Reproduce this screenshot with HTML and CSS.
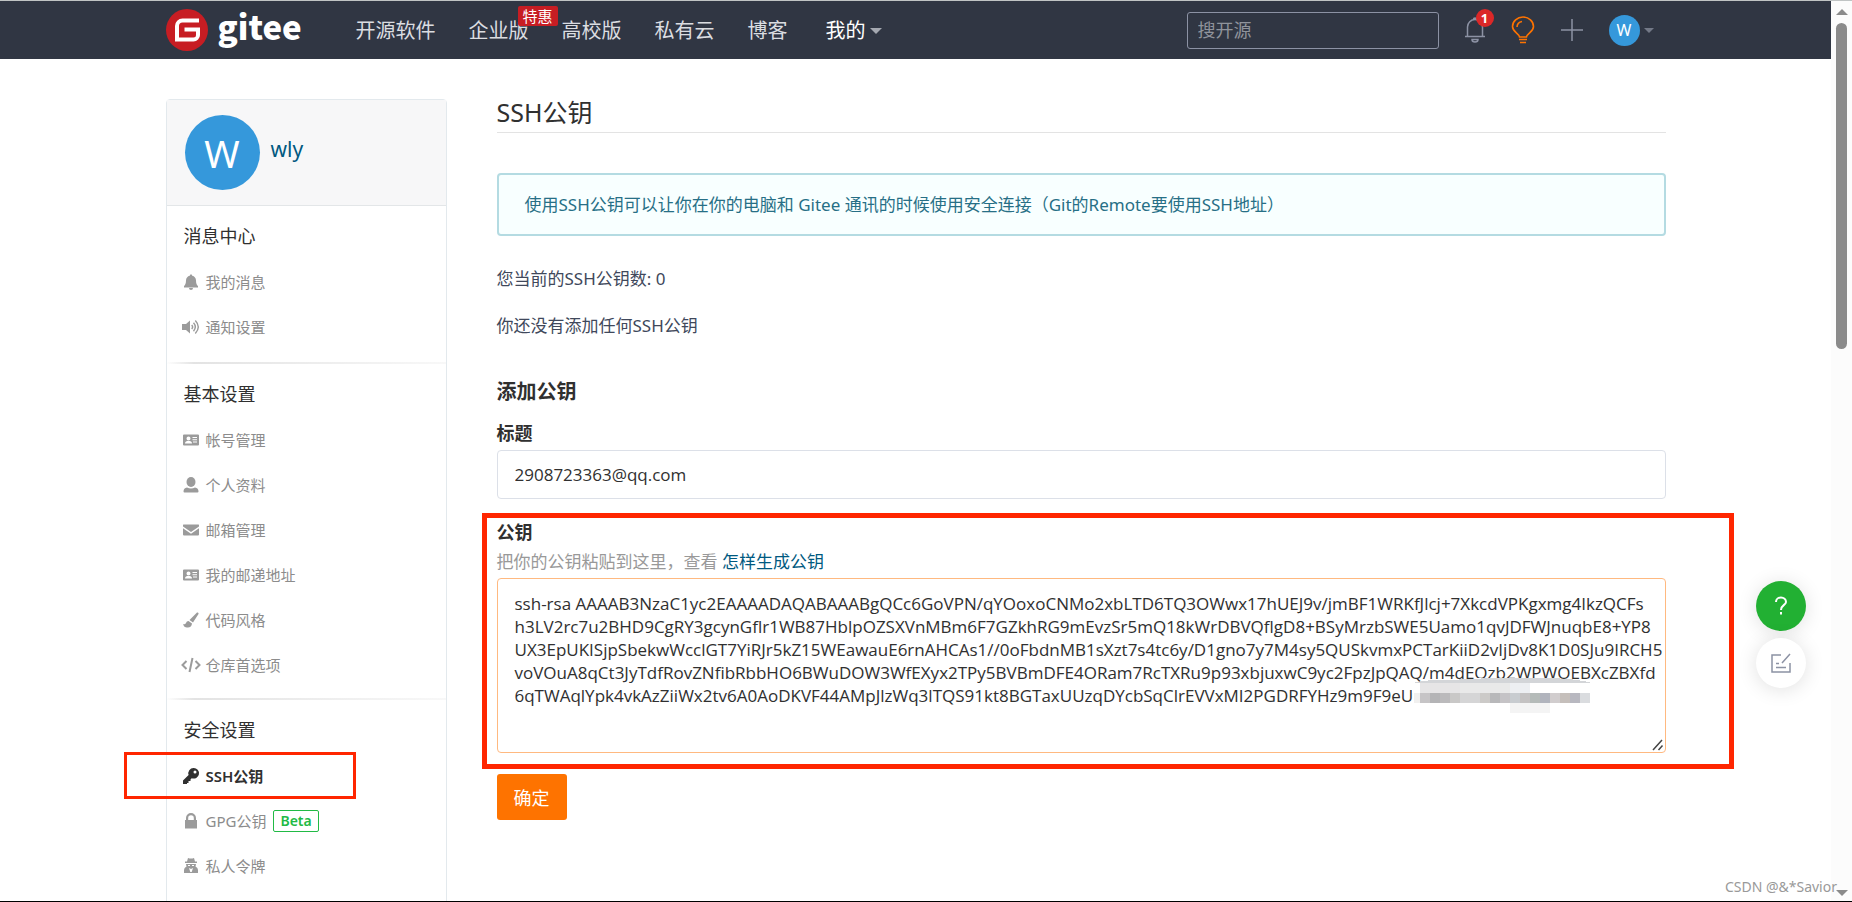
FILE: index.html
```html
<!DOCTYPE html>
<html lang="zh-CN">
<head>
<meta charset="utf-8">
<title>SSH公钥 - Gitee</title>
<link rel="stylesheet" href="styles.css">
</head>
<body>
<div class="window">
<div class="page">
  <header class="navbar">
    <div class="container navbar-inner">
      <a class="logo" href="#" aria-label="Gitee">
        <svg class="logo-mark" viewBox="0 0 42 42" aria-hidden="true"><circle cx="21" cy="21" r="21" fill="#c71d23"/><path d="M33 11.500H16.500a5.500 5.500 0 0 0-5.500 5.500V30.500H27.500a4.500 4.500 0 0 0 4.500-4.500V20.500H18.500" fill="none" stroke="#fff" stroke-width="4"/></svg>
        <span class="logo-text">gitee</span>
      </a>
      <nav class="menu">
        <a href="#">开源软件</a>
        <a href="#">企业版<span class="tag">特惠</span></a>
        <a href="#">高校版</a>
        <a href="#">私有云</a>
        <a href="#">博客</a>
        <a href="#" class="mine">我的<span class="caret"></span></a>
      </nav>
      <div class="tools">
        <input class="search" type="text" placeholder="搜开源" aria-label="搜开源">
        <a href="#" class="bell" aria-label="消息"><svg viewBox="0 0 20 26" width="20" height="26" fill="none" stroke="#8c92a4" stroke-width="1.500"><path d="M0 19.500H20M2.500 19.500V10a7.500 7.500 0 0 1 15 0V19.500M8.500 2.500Q8.500 1 10 1T11.500 2.500M7 22.500H13a3 2.500 0 0 1-6 0Z"/></svg><span class="count">1</span></a>
        <a href="#" class="bulb" aria-label="提示"><svg viewBox="0 0 24 28" width="24" height="28" fill="none" stroke="#fe7300" stroke-width="1.600"><path d="M8.500 21C8 17 1.500 16 1.500 10.500a10.500 9.500 0 0 1 21 0C22.500 16 16 17 15.500 21ZM8 23.500H16M9 26.500H15M6 11a6 6 0 0 1 5-5.500"/></svg></a>
        <a href="#" class="plus" aria-label="新建"><svg viewBox="0 0 22 22" width="22" height="22" stroke="#8c92a4" stroke-width="1.500"><path d="M0 11H22M11 0V22"/></svg></a>
        <a href="#" class="me" aria-label="wly"><span class="me-avatar">W</span><span class="caret dim"></span></a>
      </div>
    </div>
  </header>

  <div class="container body">
    <aside class="sidebar">
      <div class="profile"><span class="avatar">W</span><a href="#">wly</a></div>
      <section class="group">
        <h2>消息中心</h2>
        <a href="#"><svg viewBox="0 0 16 16"><path d="M8 0.500c.8 0 1.200.5 1.200 1.200C11.500 2.200 13 4 13 6.500c0 3 .8 4.500 2 5.500v1.500H1V12c1.200-1 2-2.500 2-5.500C3 4 4.500 2.200 6.800 1.700 6.800 1 7.200.5 8 .5ZM6 14h4a2 2 0 0 1-4 0Z"/></svg>我的消息</a>
        <a href="#"><svg viewBox="0 0 16 16"><path d="M-1 5H3L7 1.500V14.500L3 11H-1Z"/><path d="M8.700 6q2 2 0 4M10.500 3.800q3.600 4.200 0 8.400M12.300 1.500q6 6.500 0 13" fill="none" stroke="currentColor" stroke-width="1.400"/></svg>通知设置</a>
      </section>
      <section class="group">
        <h2>基本设置</h2>
        <a href="#"><svg viewBox="0 0 16 16"><path fill-rule="evenodd" d="M1 2.500H15a1 1 0 0 1 1 1V12.500a1 1 0 0 1-1 1H1a1 1 0 0 1-1-1V3.500a1 1 0 0 1 1-1ZM5.500 4.500a2 2 0 1 0 0 4 2 2 0 0 0 0-4ZM2 11.500H9C9 9.500 7.500 9 5.500 9S2 9.500 2 11.500ZM9.500 5V6H14V5ZM9.500 7.200V8.200H14V7.200ZM10 9.500V10.500H14V9.500Z"/></svg>帐号管理</a>
        <a href="#"><svg viewBox="0 0 16 16"><ellipse cx="8" cy="5" rx="4.500" ry="5"/><path d="M4 10.500Q8 12.500 12 10.500Q15.500 11 15.500 14.500Q15.500 15.500 14.500 15.500H1.500Q.5 15.500.5 14.500Q.5 11 4 10.500Z"/></svg>个人资料</a>
        <a href="#"><svg viewBox="0 0 16 16"><path d="M0 3Q0 2.500.5 2.500H15.500Q16 2.500 16 3V4.500L8 10L0 4.500ZM0 6.300L8 11.700L16 6.300V12.500Q16 13.500 15 13.500H1Q0 13.500 0 12.500Z"/></svg>邮箱管理</a>
        <a href="#"><svg viewBox="0 0 16 16"><path fill-rule="evenodd" d="M1 2.500H15a1 1 0 0 1 1 1V12.500a1 1 0 0 1-1 1H1a1 1 0 0 1-1-1V3.500a1 1 0 0 1 1-1ZM5.500 4.500a2 2 0 1 0 0 4 2 2 0 0 0 0-4ZM2 11.500H9C9 9.500 7.500 9 5.500 9S2 9.500 2 11.500ZM9.500 5V6H14V5ZM9.500 7.200V8.200H14V7.200ZM10 9.500V10.500H14V9.500Z"/></svg>我的邮递地址</a>
        <a href="#"><svg viewBox="0 0 16 16"><path d="M14 .5Q16 0 15.500 2L10 10.500L6.500 8ZM5.500 9L9 11.500Q8.500 16 4 15.500Q1 15.500 0 12Q2 13 3 11Q3.500 9 5.500 9Z"/></svg>代码风格</a>
        <a href="#"><svg viewBox="0 0 16 16"><path d="M3.500 4L-.5 8L3.500 12M12.500 4L16.500 8L12.500 12M9.500 1L6.500 15" fill="none" stroke="currentColor" stroke-width="2"/></svg>仓库首选项</a>
      </section>
      <section class="group">
        <h2>安全设置</h2>
        <a href="#" class="active"><svg viewBox="0 0 16 16"><path fill-rule="evenodd" d="M10.500 0a5.300 5.300 0 1 1-1.800 10.200L7.500 11.500V13H5.500V15H4V16H0V12.500L5.600 7A5.300 5.300 0 0 1 10.500 0ZM12 2.500a1.500 1.500 0 1 0 0 3 1.500 1.500 0 0 0 0-3Z"/></svg>SSH公钥</a>
        <a href="#"><svg viewBox="0 0 16 16"><path fill-rule="evenodd" d="M3 7V5a5 5 0 0 1 10 0V7H14V15.500H2V7ZM5.200 7H10.800V5a2.800 2.800 0 0 0-5.600 0Z"/></svg>GPG公钥<span class="beta">Beta</span></a>
        <a href="#"><svg viewBox="0 0 16 16"><path fill-rule="evenodd" d="M5 0Q8 1 11 0L12 3.500H14V5H2V3.500H4ZM3 6H13L12.500 8.500Q15 9.500 15 12V15H1V12Q1 9.500 3.500 8.500ZM5 7V8H7V7ZM9 7V8H11V7ZM6 10L7.300 14H8.700L10 10L8 11Z"/></svg>私人令牌</a>
      </section>
    </aside>

    <main class="content">
      <h1>SSH公钥</h1>
      <div class="notice">使用SSH公钥可以让你在你的电脑和 Gitee 通讯的时候使用安全连接（Git的Remote要使用SSH地址）</div>
      <p class="info">您当前的SSH公钥数: 0</p>
      <p class="info">你还没有添加任何SSH公钥</p>
      <form>
        <h3>添加公钥</h3>
        <label for="title">标题</label>
        <input id="title" class="field" type="text" value="2908723363@qq.com">
        <div class="key-block">
          <label for="key">公钥</label>
          <div class="hint">把你的公钥粘贴到这里，查看 <a href="#">怎样生成公钥</a></div>
          <div class="key-wrap">
            <textarea id="key" class="field key" spellcheck="false">ssh-rsa AAAAB3NzaC1yc2EAAAADAQABAAABgQCc6GoVPN/qYOoxoCNMo2xbLTD6TQ3OWwx17hUEJ9v/jmBF1WRKfJlcj+7XkcdVPKgxmg4IkzQCFs
h3LV2rc7u2BHD9CgRY3gcynGflr1WB87HblpOZSXVnMBm6F7GZkhRG9mEvzSr5mQ18kWrDBVQflgD8+BSyMrzbSWE5Uamo1qvJDFWJnuqbE8+YP8
UX3EpUKISjpSbekwWcclGT7YiRJr5kZ15WEawauE6rnAHCAs1//0oFbdnMB1sXzt7s4tc6y/D1gno7y7M4sy5QUSkvmxPCTarKiiD2vIjDv8K1D0SJu9IRCH5
voVOuA8qCt3JyTdfRovZNfibRbbHO6BWuDOW3WfEXyx2TPy5BVBmDFE4ORam7RcTXRu9p93xbjuxwC9yc2FpzJpQAQ/m4dEQzb2WPWOEBXcZBXfd
6qTWAqlYpk4vkAzZiiWx2tv6A0AoDKVF44AMpJlzWq3lTQS91kt8BGTaxUUzqDYcbSqClrEVVxMI2PGDRFYHz9m9F9eU</textarea>
            <svg class="mosaic" viewBox="0 0 195 40" width="195" height="40" shape-rendering="crispEdges" aria-hidden="true">
              <path d="M12 7Q50 2 110 2T192 7V17H12Z" fill="#fff"/>
              <path d="M12 7Q30 3 50 4Q100 1 140 2Q175 2 192 7Z" fill="#d3d5d8"/>
              <path d="M20 7H60V17H20Z" fill="#e6e5e6"/><path d="M60 7H110V17H60Z" fill="#e9e9e9"/><path d="M110 7H130V17H110Z" fill="#edeff2"/>
              <path d="M14 17h6v10h-6z" fill="#f1f0ef"/><path d="M20 17h10v10h-10z" fill="#c6c4c6"/><path d="M30 17h10v10h-10z" fill="#b4b4b6"/><path d="M40 17h10v10h-10z" fill="#bbbabc"/><path d="M50 17h10v10h-10z" fill="#c9c8c7"/><path d="M60 17h20v10h-20z" fill="#d5d5d6"/><path d="M80 17h10v10h-10z" fill="#cccac8"/><path d="M90 17h10v10h-10z" fill="#b8b8ba"/><path d="M100 17h10v10h-10z" fill="#c5c3c6"/><path d="M110 17h10v10h-10z" fill="#c8ccd0"/><path d="M120 17h10v10h-10z" fill="#c4c2c2"/><path d="M130 17h10v10h-10z" fill="#b5bbb9"/><path d="M140 17h10v10h-10z" fill="#b1b4bd"/><path d="M150 17h10v10h-10z" fill="#d1cdce"/><path d="M160 17h10v10h-10z" fill="#c5bfbb"/><path d="M170 17h10v10h-10z" fill="#b8b8c0"/><path d="M180 17h10v10h-10z" fill="#dadcdf"/>
              <path d="M110 27H150V37H110Z" fill="#f4f4f4"/>
            </svg>
            <svg class="grip" viewBox="0 0 12 12" width="12" height="12" stroke="#444" stroke-width="1.500" aria-hidden="true"><path d="M1 11L10 1M6.500 11L10.500 6.500"/></svg>
          </div>
        </div>
        <button class="submit" type="submit">确定</button>
      </form>
    </main>
  </div>
</div>
<div class="scrollbar" aria-hidden="true"><span class="arrow up"></span><span class="thumb"></span><span class="arrow down"></span></div>
<div class="float-actions">
  <button class="round help" type="button" aria-label="帮助"><svg viewBox="0 0 14 20" width="14" height="20" fill="none" stroke="#fff" stroke-width="2"><path d="M2 6a5 4.500 0 0 1 10 0C12 9 7 9 7 14"/><path d="M7 16V18.500"/></svg></button>
  <button class="round note" type="button" aria-label="反馈"><svg viewBox="0 0 20 20" width="20" height="20" fill="none" stroke="#8c92a4" stroke-width="1.500"><path d="M10 2H1V19H19V10M19 1L11 10M5 10.500H8M5 14.500H15"/></svg></button>
</div>
<div class="watermark">CSDN @&amp;*Savior</div>
</div>
</body>
</html>
```
FILE: styles.css
```css
*, *::before, *::after { box-sizing: border-box; }
body {
  margin: 0;
  font-family: "Noto Sans", "Noto Sans CJK SC", sans-serif;
  font-size: 17px;
  line-height: 24px;
  color: #40485b;
  background: #fff;
}
a { color: #005980; text-decoration: none; }
h1, h2, h3, p { margin: 0; }
input, textarea, button { font-family: inherit; }

.window {
  position: relative;
  display: flex;
  height: 100vh;
  overflow: hidden;
  border-top: 1px solid #c0c4c4;
  border-bottom: 1px solid #000;
}
.page { flex: 1; min-width: 0; overflow: hidden; }
.container { max-width: 1500px; margin: 0 auto; }

/* Top bar */
.navbar { background: #303643; }
.navbar-inner { display: flex; align-items: center; height: 58px; }
.logo { display: flex; align-items: center; gap: 10px; flex: none; width: 190px; }
.logo-mark { width: 42px; height: 42px; }
.logo-text {
  font-family: "Noto Sans CJK SC", sans-serif;
  font-weight: 900;
  font-size: 33px;
  line-height: 40px;
  color: #fff;
  padding-bottom: 8px;
}
.menu { display: flex; gap: 33px; font-size: 20px; line-height: 60px; }
.menu a { position: relative; color: #dbdde1; white-space: nowrap; }
.menu .mine { color: #fff; display: flex; align-items: center; gap: 4px; margin-left: 5px; }
.menu { padding-top: 2px; }
.tag {
  position: absolute;
  left: 49px;
  top: 5px;
  z-index: 1;
  width: 40px;
  height: 20px;
  border-radius: 2px;
  background: #c71d23;
  color: #fff;
  font-size: 15px;
  line-height: 20px;
  text-align: center;
}
.caret { border: 6px solid transparent; border-top-color: #a4a8b0; border-bottom: 0; }
.caret.dim { border-width: 5px; border-bottom: 0; border-top-color: #737987; }
.tools { display: flex; align-items: center; gap: 26px; margin-left: auto; padding-right: 12px; }
.tools a { display: flex; align-items: center; }
.search {
  width: 252px;
  height: 37px;
  padding: 0 10px;
  border: 1px solid #8c92a4;
  border-radius: 3px;
  background: transparent;
  color: #fff;
  font-size: 18px;
}
.search::placeholder { color: #8f939b; opacity: 1; }
.bell { position: relative; }
.count {
  position: absolute;
  left: 11px;
  top: -8px;
  width: 18px;
  height: 18px;
  border-radius: 50%;
  background: #db2828;
  color: #fff;
  font-size: 13px;
  font-weight: 700;
  line-height: 18px;
  text-align: center;
}
.me { gap: 4px; }
.me-avatar {
  width: 31px;
  height: 31px;
  border-radius: 50%;
  background: #3598db;
  color: #fff;
  font-size: 16px;
  line-height: 31px;
  text-align: center;
}

/* Two columns */
.body { display: flex; gap: 50px; padding-top: 40px; }

.sidebar { flex: none; width: 281px; border: 1px solid #e3e9ed; border-radius: 4px; padding-bottom: 80px; }
.profile {
  display: flex;
  gap: 11px;
  padding: 15px 18px;
  border-bottom: 1px solid #e3e6e8;
  background: #f7f7f8;
  font-size: 21px;
  line-height: 68px;
}
.avatar {
  width: 75px;
  height: 75px;
  border-radius: 50%;
  background: #3598db;
  color: #fff;
  font-size: 38px;
  line-height: 76px;
  text-align: center;
}
.group {
  padding: 15px 16px 11px;
  border-bottom: 2px solid;
  border-image: linear-gradient(to right, #fff, #e3e3e3 10%, #f8f8f8) 1;
}
.group:first-of-type { padding-bottom: 13px; }
.group:last-child { border-bottom: 0; }
.group h2 { margin-bottom: 8px; font-size: 18px; font-weight: 400; line-height: 30px; color: #303030; padding-left: 1px; }
.group a { display: flex; align-items: center; gap: 7px; height: 45px; font-size: 15px; color: #8c8c8c; }
.group svg { width: 16px; height: 16px; fill: currentColor; overflow: visible; color: #9b9b9b; }
.group .active { position: relative; color: #303030; font-weight: 600; }
.group .active svg { color: #303030; }
.active::after {
  content: "";
  position: absolute;
  left: -59px;
  top: -1px;
  width: 232px;
  height: 47px;
  border: 3px solid #ff2600;
}
.beta {
  padding: 0 6px;
  border: 1px solid #21ba45;
  border-radius: 2px;
  color: #21ba45;
  font-size: 14px;
  font-weight: 600;
  line-height: 20px;
}

.content { flex: 1; min-width: 0; }
.content h1 {
  padding-bottom: 7px;
  border-bottom: 1px solid #e3e3e3;
  font-size: 25px;
  font-weight: 400;
  line-height: 26px;
  color: #303030;
}
.notice {
  margin: 40px 0 19px;
  padding: 18px 26px 17px;
  border: 2px solid #b4dbe2;
  border-radius: 4px;
  background: #f8ffff;
  color: #276f86;
}
.info { line-height: 47px; }
.content h3 { margin: 28px 0 14px; font-size: 20px; font-weight: 700; line-height: 30px; color: #303030; }
.content label { display: block; font-size: 18px; font-weight: 700; color: #303030; }
.field {
  display: block;
  width: 100%;
  padding: 12px 17px;
  border: 1px solid #dce0e8;
  border-radius: 4px;
  outline: 0;
  background: #fff;
  color: #303030;
  font-family: "Open Sans", sans-serif;
  font-size: 17px;
  line-height: 23px;
}
#title { margin-top: 5px; }
.key-block { position: relative; margin-top: 21px; }
.key-block::after {
  content: "";
  position: absolute;
  inset: -7px -68px -16px -15px;
  border: 5px solid #ff2600;
  pointer-events: none;
}
.hint { margin: 6px 0 4px; color: #999; }
.key-wrap { position: relative; }
.key {
  height: 175px;
  padding: 13px 0 0 17px;
  border-color: #ffb980;
  white-space: pre;
  overflow: hidden;
  resize: none;
}
.mosaic { position: absolute; left: 903px; top: 98px; }
.grip { position: absolute; right: 2px; bottom: 2px; }
.submit {
  display: block;
  height: 46px;
  margin-top: 21px;
  padding: 0 17px;
  border: 0;
  border-radius: 3px;
  background: #fe7300;
  color: #fff;
  font-size: 18px;
}

/* Window furniture */
.scrollbar {
  display: flex;
  flex-direction: column;
  align-items: center;
  width: 21px;
  padding: 8px 0 5px;
  background: #fcfcfc;
}
.arrow { border: 6px solid transparent; }
.up { border-top: 0; border-bottom-color: #8b8b8b; }
.down { border-bottom: 0; border-top-color: #8b8b8b; margin-top: auto; }
.thumb { width: 11px; height: 326px; margin-top: 8px; border-radius: 6px; background: #8b8b8b; }
.float-actions { position: absolute; right: 46px; top: 580px; display: grid; gap: 7px; }
.round {
  display: grid;
  place-items: center;
  width: 50px;
  height: 50px;
  padding: 0;
  border: 0;
  border-radius: 50%;
  background: #fff;
  box-shadow: 0 2px 20px rgba(0, 0, 0, 0.12);
}
.help { background: #22b033; }
.watermark {
  position: absolute;
  right: 15px;
  bottom: 2px;
  color: #999;
  font-size: 14px;
}
```
